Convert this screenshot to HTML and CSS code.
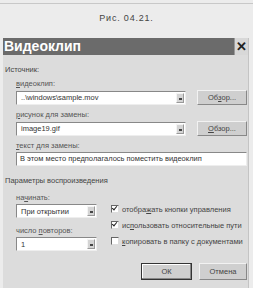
FILE: index.html
```html
<!DOCTYPE html>
<html lang="ru">
<head>
    <meta charset="UTF-8">
    <meta name="viewport" content="width=device-width, initial-scale=1.0">
    <title>Видеоклип</title>
    <link rel="stylesheet" href="styles.css">
</head>
<body>
    <div class="page">
        <div class="caption">Рис. 04.21.</div>

        <div class="dialog">
            <header class="titlebar">
                <h1>Видеоклип</h1>
                <div class="close-btn">✕</div>
            </header>

            <main class="dialog-body">
                <div class="group-title">Источник:</div>
                <div class="group">
                    <label class="field-label"><u>в</u>идеоклип:</label>
                    <div class="field-row">
                        <div class="combo wide">
                            <span class="combo-text">..\windows\sample.mov</span>
                            <span class="combo-arrow"></span>
                        </div>
                        <div class="btn browse">Об<u>з</u>ор...</div>
                    </div>

                    <label class="field-label"><u>р</u>исунок для замены:</label>
                    <div class="field-row">
                        <div class="combo wide">
                            <span class="combo-text">image19.gif</span>
                            <span class="combo-arrow"></span>
                        </div>
                        <div class="btn browse"><u>О</u>бзор...</div>
                    </div>

                    <label class="field-label"><u>т</u>екст для замены:</label>
                    <div class="textbox">В этом место предполагалось поместить видеоклип</div>
                </div>

                <div class="group-title second">Параметры воспроизведения</div>
                <div class="group options">
                    <div class="col-left">
                        <label class="field-label">на<u>ч</u>инать:</label>
                        <div class="combo narrow">
                            <span class="combo-text">При открытии</span>
                            <span class="combo-arrow"></span>
                        </div>
                        <label class="field-label repeat">число <u>п</u>овторов:</label>
                        <div class="combo narrow">
                            <span class="combo-text">1</span>
                            <span class="combo-arrow"></span>
                        </div>
                    </div>
                    <div class="col-right">
                        <div class="check-row"><span class="checkbox checked"></span><span>отобра<u>ж</u>ать кнопки управления</span></div>
                        <div class="check-row"><span class="checkbox checked"></span><span>ис<u>п</u>ользовать относительные пути</span></div>
                        <div class="check-row"><span class="checkbox"></span><span><u>к</u>опировать в папку с документами</span></div>
                    </div>
                </div>

                <div class="buttons">
                    <div class="btn ok">ОК</div>
                    <div class="btn cancel">Отмена</div>
                </div>
            </main>
        </div>
    </div>
</body>
</html>
```

FILE: styles.css
```css
body, html {
    margin: 0;
    padding: 0;
    font-family: "Liberation Sans", Arial, sans-serif;
    background-color: #ececec;
    color: #333;
}

.page {
    width: 253px;
    height: 288px;
    overflow: hidden;
    border-top: 1px solid #c8c8c8;
    margin-top: 3px;
    box-sizing: border-box;
}

.caption {
    text-align: center;
    font-size: 9px;
    letter-spacing: 0.8px;
    color: #444;
    padding: 9px 0 0 0;
    height: 25px;
    box-sizing: border-box;
    margin-bottom: 9px;
}

.dialog {
    margin-left: 3px;
    width: 245px;
    background-color: #dcdcdc;
    border-right: 1px solid #c4c4c4;
    height: 260px;
}

.titlebar {
    display: flex;
    align-items: stretch;
    height: 17px;
}

.titlebar h1 {
    flex: 1;
    margin: 0;
    background-color: #6b6b6b;
    color: #fff;
    font-size: 14px;
    font-weight: bold;
    line-height: 17px;
    padding-left: 1px;
}

.close-btn {
    width: 13px;
    background-color: #d8d8d8;
    color: #222;
    font-size: 13px;
    font-weight: bold;
    line-height: 17px;
    text-align: center;
    border-left: 1px solid #9a9a9a;
}

.dialog-body {
    padding: 10px 0 0 2px;
    font-size: 7.5px;
}

.group-title {
    color: #444;
    line-height: 10px;
    height: 10px;
}

.group-title.second {
    margin-top: 10px;
}

.group {
    padding-left: 11px;
}

.field-label {
    display: block;
    color: #555;
    margin-top: 5px;
    margin-bottom: 1px;
    line-height: 10px;
    height: 10px;
}

.group-title + .group > .field-label:first-child {
    margin-top: 4px;
}

.field-row {
    display: flex;
    align-items: center;
    gap: 11px;
}

.combo {
    display: flex;
    align-items: center;
    height: 12px;
    background-color: #fff;
    border: 1px solid #888;
    border-right-color: #eee;
    border-bottom-color: #eee;
}

.combo.wide {
    width: 168px;
}

.combo.narrow {
    width: 79px;
}

.combo-text {
    flex: 1;
    padding-left: 4px;
    color: #333;
    white-space: nowrap;
}

.combo-arrow {
    width: 8px;
    height: 10px;
    margin-right: 1px;
    background-color: #d4d4d4;
    border: 1px solid #f4f4f4;
    border-right-color: #999;
    border-bottom-color: #999;
    box-sizing: border-box;
    position: relative;
}

.combo-arrow::after {
    content: "";
    position: absolute;
    left: 2px;
    top: 4px;
    width: 3px;
    height: 2px;
    background-color: #444;
}

.btn {
    display: flex;
    align-items: center;
    justify-content: center;
    height: 15px;
    background-color: #cfcfcf;
    border: 1px solid #f2f2f2;
    border-right-color: #888;
    border-bottom-color: #888;
    color: #444;
    box-sizing: border-box;
}

.btn.browse {
    width: 50px;
}

.textbox {
    width: 226px;
    height: 12px;
    background-color: #fff;
    border: 1px solid #888;
    border-right-color: #eee;
    border-bottom-color: #eee;
    padding-left: 3px;
    line-height: 12px;
    box-sizing: content-box;
}

.options {
    display: flex;
    gap: 14px;
}

.col-left .field-label {
    margin-top: 7px;
}

.col-left .field-label.repeat {
    margin-top: 8px;
}

.col-right {
    padding-top: 15px;
}

.check-row {
    display: flex;
    align-items: center;
    gap: 3px;
    height: 16px;
    color: #444;
    white-space: nowrap;
}

.checkbox {
    width: 6px;
    height: 6px;
    background-color: #fff;
    border: 1px solid #666;
    border-right-color: #ddd;
    border-bottom-color: #ddd;
    position: relative;
}

.checkbox.checked::after {
    content: "";
    position: absolute;
    left: 1px;
    top: -1px;
    width: 2px;
    height: 4px;
    border: solid #222;
    border-width: 0 1.5px 1.5px 0;
    transform: rotate(40deg);
}

.buttons {
    display: flex;
    justify-content: flex-end;
    gap: 7px;
    padding-right: 1px;
    margin-top: 12px;
}

.btn.ok {
    width: 51px;
    height: 17px;
    border: 1px solid #333;
    box-shadow: inset -1px -1px #888, inset 1px 1px #fff;
}

.btn.cancel {
    width: 48px;
    height: 17px;
}
```
